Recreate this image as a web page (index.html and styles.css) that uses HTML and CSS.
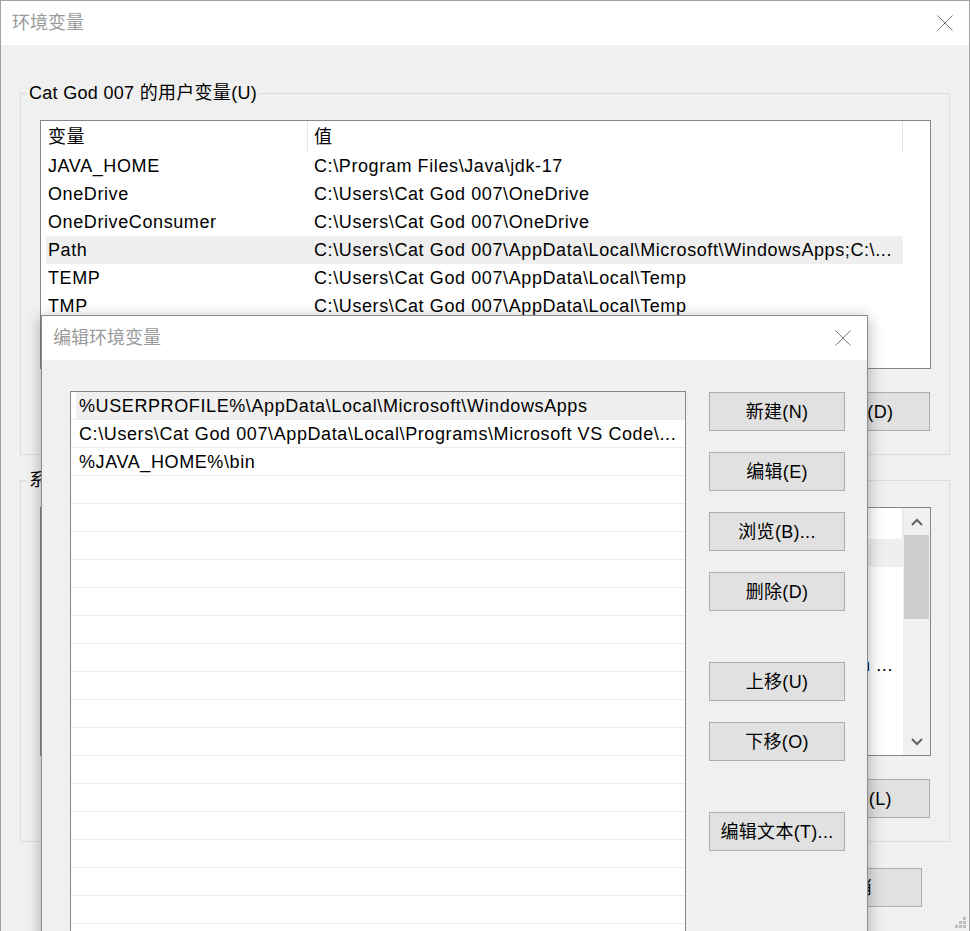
FILE: index.html
```html
<!DOCTYPE html>
<html lang="zh-CN">
<head>
<meta charset="utf-8">
<title>环境变量</title>
<link rel="stylesheet" href="styles.css">
</head>
<body>
<div class="desktop">
  <section class="win main-win">
    <header class="titlebar">
      <span class="title">环境变量</span>
      <span class="close"><svg width="16" height="16" viewBox="0 0 16 16"><path d="M0.5 0.5 L15.5 15.5 M15.5 0.5 L0.5 15.5" stroke="#777" stroke-width="1" fill="none"/></svg></span>
    </header>
    <div class="win-body">
      <fieldset class="group">
        <legend>Cat God 007 的用户变量(U)</legend>
        <div class="lv">
          <div class="lv-main">
            <div class="lv-head"><div class="c1">变量</div><div class="c2">值</div></div>
            <div class="lv-row"><div class="c1">JAVA_HOME</div><div class="c2">C:\Program Files\Java\jdk-17</div></div>
            <div class="lv-row"><div class="c1">OneDrive</div><div class="c2">C:\Users\Cat God 007\OneDrive</div></div>
            <div class="lv-row"><div class="c1">OneDriveConsumer</div><div class="c2">C:\Users\Cat God 007\OneDrive</div></div>
            <div class="lv-row sel"><div class="c1">Path</div><div class="c2">C:\Users\Cat God 007\AppData\Local\Microsoft\WindowsApps;C:\...</div></div>
            <div class="lv-row"><div class="c1">TEMP</div><div class="c2">C:\Users\Cat God 007\AppData\Local\Temp</div></div>
            <div class="lv-row"><div class="c1">TMP</div><div class="c2">C:\Users\Cat God 007\AppData\Local\Temp</div></div>
          </div>
        </div>
        <div class="btn-row">
          <button class="btn">新建(N)...</button>
          <button class="btn">编辑(E)...</button>
          <button class="btn">删除(D)</button>
        </div>
      </fieldset>
      <fieldset class="group">
        <legend>系统变量(S)</legend>
        <div class="lv">
          <div class="lv-main">
            <div class="lv-head"><div class="c1">变量</div><div class="c2">值</div></div>
            <div class="lv-row sel"><div class="c1">ComSpec</div><div class="c2">C:\WINDOWS\system32\cmd.exe</div></div>
            <div class="lv-row"><div class="c1">DriverData</div><div class="c2">C:\Windows\System32\Drivers\DriverData</div></div>
            <div class="lv-row"><div class="c1">NUMBER_OF_PROCESSORS</div><div class="c2">16</div></div>
            <div class="lv-row"><div class="c1">OS</div><div class="c2">Windows_NT</div></div>
            <div class="lv-row"><div class="c1">Path</div><div class="c2 tail"><span>C:\WINDOWS\system32;C:\WINDOWS;C:\WINDOWS\System32\Wbem;C:\Program Files (x86)\NVIDIA Corporation ...</span></div></div>
            <div class="lv-row"><div class="c1">PATHEXT</div><div class="c2">.COM;.EXE;.BAT;.CMD;.VBS;.VBE;.JS;.JSE;.WSF;.WSH;.MSC</div></div>
            <div class="lv-row"><div class="c1">PROCESSOR_ARCHITECTURE</div><div class="c2">AMD64</div></div>
            <div class="lv-row"><div class="c1">PROCESSOR_IDENTIFIER</div><div class="c2">Intel64 Family 6 Model 154 Stepping 3, GenuineIntel</div></div>
          </div>
          <div class="vscroll">
            <div class="vs-arrow"><svg width="12" height="8" viewBox="0 0 12 8"><path d="M1 7 L6 2 L11 7" stroke="#606060" stroke-width="2" fill="none"/></svg></div>
            <div class="vs-track"><div class="vs-thumb"></div></div>
            <div class="vs-arrow"><svg width="12" height="8" viewBox="0 0 12 8"><path d="M1 1 L6 6 L11 1" stroke="#606060" stroke-width="2" fill="none"/></svg></div>
          </div>
        </div>
        <div class="btn-row">
          <button class="btn">新建(W)...</button>
          <button class="btn">编辑(I)...</button>
          <button class="btn">删除(L)</button>
        </div>
      </fieldset>
      <div class="footer">
        <button class="btn">确定</button>
        <button class="btn">取消</button>
      </div>
    </div>
    <svg class="grip" width="12" height="12" viewBox="0 0 12 12">
      <rect x="8" y="0" width="3" height="3" fill="#bdbdbd"/>
      <rect x="4" y="4" width="3" height="3" fill="#bdbdbd"/>
      <rect x="8" y="4" width="3" height="3" fill="#bdbdbd"/>
      <rect x="0" y="8" width="3" height="3" fill="#bdbdbd"/>
      <rect x="4" y="8" width="3" height="3" fill="#bdbdbd"/>
      <rect x="8" y="8" width="3" height="3" fill="#bdbdbd"/>
    </svg>
  </section>

  <section class="win dialog">
    <header class="titlebar">
      <span class="title">编辑环境变量</span>
      <span class="close"><svg width="16" height="16" viewBox="0 0 16 16"><path d="M0.5 0.5 L15.5 15.5 M15.5 0.5 L0.5 15.5" stroke="#777" stroke-width="1" fill="none"/></svg></span>
    </header>
    <div class="dlg-body">
      <div class="path-list">
        <div class="path-row sel">%USERPROFILE%\AppData\Local\Microsoft\WindowsApps</div>
        <div class="path-row">C:\Users\Cat God 007\AppData\Local\Programs\Microsoft VS Code\...</div>
        <div class="path-row">%JAVA_HOME%\bin</div>
        <div class="path-row"></div>
        <div class="path-row"></div>
        <div class="path-row"></div>
        <div class="path-row"></div>
        <div class="path-row"></div>
        <div class="path-row"></div>
        <div class="path-row"></div>
        <div class="path-row"></div>
        <div class="path-row"></div>
        <div class="path-row"></div>
        <div class="path-row"></div>
        <div class="path-row"></div>
        <div class="path-row"></div>
        <div class="path-row"></div>
        <div class="path-row"></div>
        <div class="path-row"></div>
        <div class="path-row"></div>
      </div>
      <div class="btn-col">
        <button class="btn">新建(N)</button>
        <button class="btn">编辑(E)</button>
        <button class="btn">浏览(B)...</button>
        <button class="btn">删除(D)</button>
        <button class="btn spaced">上移(U)</button>
        <button class="btn">下移(O)</button>
        <button class="btn spaced">编辑文本(T)...</button>
      </div>
    </div>
  </section>
</div>
</body>
</html>
```

FILE: styles.css
```css
* { box-sizing: border-box; }

html, body {
  margin: 0;
  padding: 0;
}

body {
  width: 970px;
  height: 931px;
  overflow: hidden;
  background: #f0f0f0;
  font-family: "Liberation Sans", "Noto Sans CJK SC", sans-serif;
  font-size: 18px;
  letter-spacing: 0.6px;
  color: #000;
}

.desktop {
  position: relative;
  width: 970px;
  height: 931px;
  overflow: hidden;
}

.win {
  background: #f0f0f0;
  border: 1px solid #a3a3a3;
  display: flex;
  flex-direction: column;
}

.main-win {
  position: relative;
  width: 970px;
  height: 931px;
  border-bottom: 0;
}

.titlebar {
  flex: none;
  height: 44px;
  background: #fff;
  display: flex;
  align-items: center;
  justify-content: space-between;
}

.title {
  padding-left: 11px;
  color: #9a9a9a;
  line-height: 44px;
  letter-spacing: 0;
}

.close {
  width: 48px;
  height: 44px;
  display: flex;
  align-items: center;
  justify-content: center;
}

.close svg { display: block; }

.win-body {
  flex: 1;
  padding: 36px 19px 0 19px;
}

.group {
  margin: 0;
  width: 930px;
  min-width: 0;
  border: 1px solid #dcdcdc;
  padding: 15px 18px 23px 6px;
}

.group + .group { margin-top: 13px; }

.group legend {
  padding: 0 2px;
  margin: 0;
  line-height: 24px;
  letter-spacing: 0.3px;
}

.group .lv,
.group .btn-row { margin-left: 13px; }

.lv {
  width: 891px;
  height: 249px;
  border: 1px solid #828790;
  background: #fff;
  display: flex;
  overflow: hidden;
}

.lv-main {
  flex: none;
  width: 862px;
  overflow: hidden;
}

.lv-head {
  display: flex;
  height: 31px;
  line-height: 32px;
}

.lv-head .c1,
.lv-head .c2 { border-right: 1px solid #e5e5e5; }

.c1 {
  flex: none;
  width: 267px;
  padding-left: 7px;
  white-space: nowrap;
  overflow: hidden;
}

.c2 {
  flex: none;
  width: 595px;
  padding-left: 6px;
  padding-right: 10px;
  white-space: nowrap;
  overflow: hidden;
}

.c2.tail {
  display: flex;
  justify-content: flex-end;
}

.c2.tail span { flex: none; }

.lv-row {
  display: flex;
  height: 28px;
  line-height: 29px;
}

.lv-row.sel {
  background: #efefef;
  box-shadow: inset 5px 0 0 #fff;
}

.vscroll {
  flex: none;
  width: 27px;
  background: #f0f0f0;
  display: flex;
  flex-direction: column;
}

.vs-arrow {
  height: 27px;
  display: flex;
  align-items: center;
  justify-content: center;
}

.vs-arrow svg { display: block; }

.vs-track { flex: 1; }

.vs-thumb {
  height: 84px;
  margin: 0 1px;
  background: #cdcdcd;
}

.btn-row {
  display: flex;
  justify-content: flex-end;
  gap: 12px;
  margin-top: 23px;
  padding-right: 1px;
}

.btn {
  flex: none;
  width: 136px;
  height: 39px;
  margin: 0;
  padding: 0;
  border: 1px solid #adadad;
  border-radius: 0;
  background: #e1e1e1;
  font: inherit;
  letter-spacing: 0.3px;
  color: #000;
  line-height: 39px;
  text-align: center;
}

.footer {
  display: flex;
  justify-content: flex-end;
  gap: 13px;
  margin-top: 26px;
  padding-right: 28px;
}

.grip {
  position: absolute;
  right: 2px;
  bottom: 2px;
  display: block;
}

.dialog {
  position: absolute;
  left: 41px;
  top: 315px;
  width: 827px;
  height: 640px;
  border-color: #8c8c8c;
  box-shadow: 0 3px 14px rgba(0, 0, 0, 0.32);
}

.dlg-body {
  flex: 1;
  display: flex;
  align-items: flex-start;
  gap: 23px;
  padding: 31px 0 0 28px;
}

.path-list {
  flex: none;
  width: 616px;
  height: 600px;
  border: 1px solid #828790;
  background: #fff;
  overflow: hidden;
}

.path-row {
  height: 28px;
  line-height: 28px;
  border-bottom: 1px solid #ececec;
  padding-left: 8px;
  white-space: nowrap;
  overflow: hidden;
}

.path-row.sel {
  background: #efefef;
  box-shadow: inset 5px 0 0 #fff;
}

.btn-col {
  display: flex;
  flex-direction: column;
  gap: 21px;
  padding-top: 1px;
}

.btn-col .spaced { margin-top: 30px; }
```
